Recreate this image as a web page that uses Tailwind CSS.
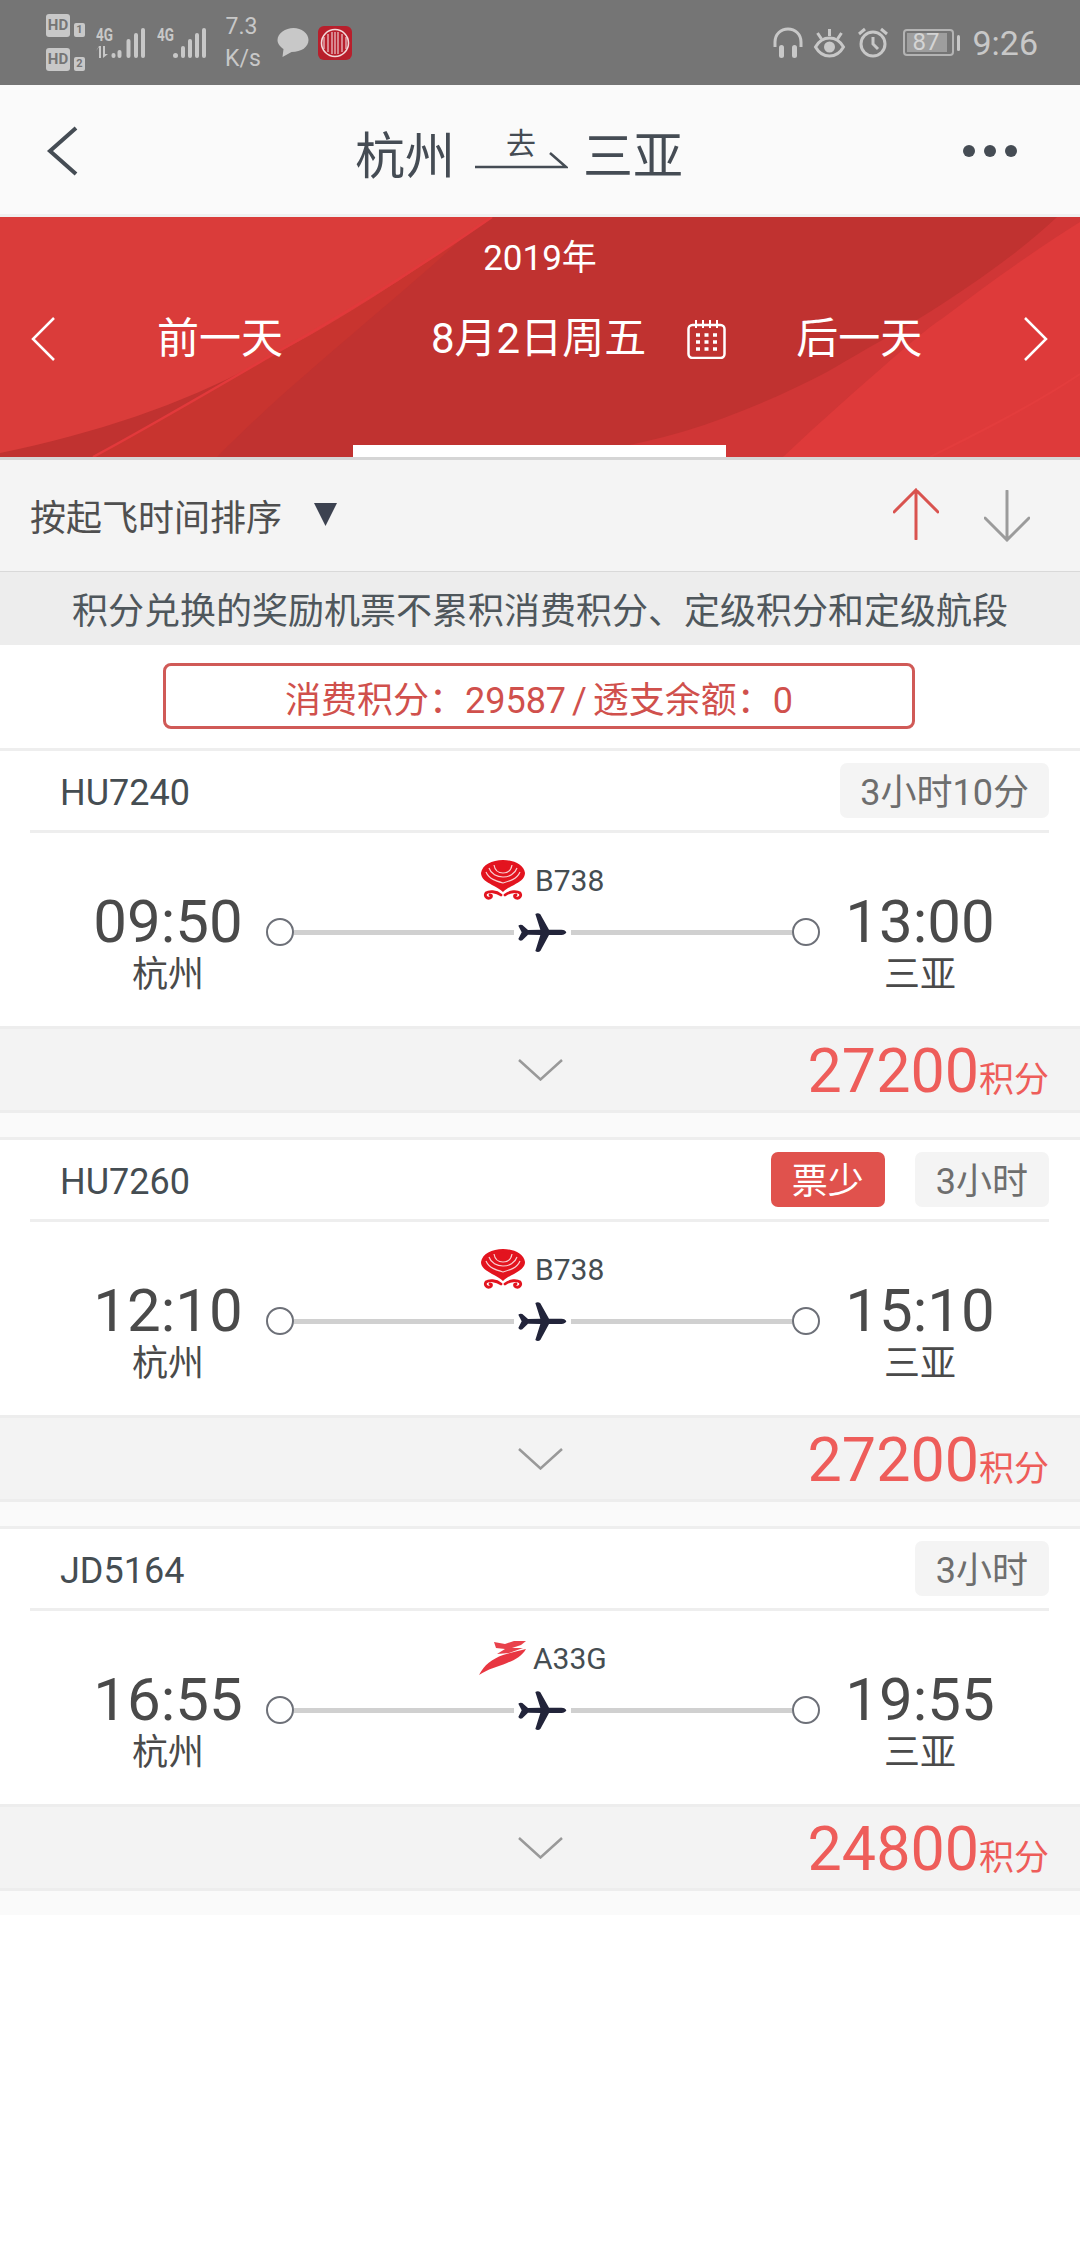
<!DOCTYPE html>
<html lang="zh-CN">

<head>
    <meta charset="UTF-8" />
    <meta name="viewport" content="width=device-width, initial-scale=1" />
    <title>杭州 - 三亚</title>
    <script src="https://cdn.jsdelivr.net/npm/@tailwindcss/browser@4"></script>
</head>

<body class="bg-white font-[Roboto,'Noto_Sans_CJK_SC',sans-serif] text-[#4a4a4a]">
    <!-- shared icons -->
    <svg class="absolute w-0 h-0">
        <symbol id="plane" viewBox="145 190 147 120">
            <path fill="#22243a" d="M290 248 Q288 241 275 240 L238 240 L212 194 Q205 188 197 193 L212 240 L175 241 L158 226 Q150 224 146 228 L156 248 L146 268 Q150 275 158 272 L175 255 L212 256 L197 304 Q205 310 212 304 L238 256 L275 256 Q288 255 290 248Z" />
        </symbol>
        <symbol id="hainan" viewBox="0 0 45 40">
            <path fill="#e3141f" d="M22 0C11 0 1 5 0 13C0 19 6 22 11 25C15 27 19 29 22 32C25 29 29 27 33 25C38 22 44 19 44 13C43 5 33 0 22 0Z" />
            <g fill="none" stroke="#fff" stroke-width="1.2" opacity="0.8">
                <path d="M13 5C14 11 18 13 22 13C26 13 30 11 31 5" />
                <path d="M8 8C10 14 16 17 22 17C28 17 34 14 36 8" />
                <path d="M5 12C8 19 15 21 22 23C29 21 36 19 39 12" />
            </g>
            <circle cx="22" cy="7" r="3.6" fill="#e3141f" />
            <g fill="none" stroke="#e3141f" stroke-width="2.8" stroke-linecap="round">
                <path d="M20 35C15 31 8 31 5 33C3 36 6 39 9 38C11 37 11 35 9 35" />
                <path d="M24 35C29 31 36 31 39 33C41 36 38 39 35 38C33 37 33 35 35 35" />
            </g>
        </symbol>
        <symbol id="dragon" viewBox="0 0 48 36">
            <g fill="#e5202c">
                <path opacity="0.9" d="M0 35C5 25 13 19 24 15C31 13 39 11 47 9C43 16 36 20 28 23C18 27 9 29 0 35Z" />
                <path opacity="0.85" d="M15 2L26 4L35 1L47 1L42 5L33 8L44 8L30 13L18 14L26 9L17 8Z" />
            </g>
        </symbol>
    </svg>

    <!-- Status bar -->
    <div class="h-[85px] bg-[#757575] flex items-center pl-[46px] pr-[42px] text-[#c8c8c8]">
        <div class="flex flex-col gap-[11px] w-[39px]">
            <div class="flex items-end justify-between">
                <span class="w-[24px] h-[23px] rounded-[3px] bg-[#c8c8c8] text-[#757575] text-[15px] leading-[23px] font-bold text-center">HD</span>
                <span class="w-[11px] h-[14px] rounded-[2px] bg-[#c8c8c8] text-[#757575] text-[11px] leading-[14px] font-bold text-center">1</span>
            </div>
            <div class="flex items-end justify-between">
                <span class="w-[24px] h-[23px] rounded-[3px] bg-[#c8c8c8] text-[#757575] text-[15px] leading-[23px] font-bold text-center">HD</span>
                <span class="w-[11px] h-[14px] rounded-[2px] bg-[#c8c8c8] text-[#757575] text-[11px] leading-[14px] font-bold text-center">2</span>
            </div>
        </div>
        <div class="relative ml-[11px] w-[49px] h-[32px]">
            <span class="absolute left-0 top-0 text-[18px] leading-[15px] font-bold scale-x-[0.75] origin-left">4G</span>
            <svg class="absolute left-0 top-0" width="49" height="32" viewBox="0 0 49 32" fill="#c8c8c8">
                <path d="M0 24L3 20V31H5V19H3ZM7 19V31L12 27H9V19Z" />
                <rect x="15.5" y="26" width="4" height="5" rx="2" />
                <rect x="21.5" y="23" width="4" height="8" rx="2" />
                <rect x="30.5" y="12" width="4" height="19" rx="2" />
                <rect x="38" y="6" width="4" height="25" rx="2" />
                <rect x="45" y="1" width="4" height="30" rx="2" />
            </svg>
        </div>
        <div class="relative ml-[12px] w-[50px] h-[32px]">
            <span class="absolute left-0 top-0 text-[18px] leading-[15px] font-bold scale-x-[0.75] origin-left">4G</span>
            <svg class="absolute left-0 top-0" width="50" height="32" viewBox="0 0 50 32" fill="#c8c8c8">
                <rect x="16" y="26" width="5" height="5" rx="2.5" />
                <rect x="24" y="19" width="4" height="12" rx="2" />
                <rect x="31" y="12" width="4" height="19" rx="2" />
                <rect x="38" y="6" width="4" height="25" rx="2" />
                <rect x="45" y="1" width="4" height="30" rx="2" />
            </svg>
        </div>
        <div class="ml-[18px] w-[33px] text-center text-[23px] leading-[32px]">
            <p>7.3</p>
            <p>K/s</p>
        </div>
        <svg class="ml-[19px]" width="32" height="31" viewBox="0 0 31 31" fill="#c8c8c8">
            <path d="M16 1C8 1 0 6 0 13C0 17 3 20 6 22L5 30L14 25C24 25 31 20 31 13C31 6 24 1 16 1Z" />
        </svg>
        <svg class="ml-[9px]" width="34" height="34" viewBox="0 0 34 34">
            <rect width="34" height="34" rx="6" fill="#b81f2c" />
            <circle cx="17" cy="17" r="13.5" fill="none" stroke="#f2d9da" stroke-width="1.6" />
            <path d="M6 11V23M10 8V26M14 6V28M17 6V28M20 6V28M24 8V26M28 11V23" stroke="#f2d9da" stroke-width="1.3" opacity="0.85" />
        </svg>

        <svg class="ml-auto" width="30" height="31" viewBox="0 0 30 31" fill="none" stroke="#c8c8c8">
            <path stroke-width="3" d="M2 20V15C2 7 8 2 15 2C22 2 28 7 28 15V20" />
            <rect x="6" y="18" width="5" height="13" rx="2.5" fill="#c8c8c8" stroke="none" />
            <rect x="19" y="18" width="5" height="13" rx="2.5" fill="#c8c8c8" stroke="none" />
        </svg>
        <svg class="ml-[10px]" width="33" height="30" viewBox="0 0 32 30" fill="none" stroke="#c8c8c8" stroke-width="3">
            <path d="M2 19C6 12 11 10 16 10C21 10 26 12 30 19C26 26 21 28 16 28C11 28 6 26 2 19Z" />
            <circle cx="16" cy="19" r="5.5" fill="#c8c8c8" stroke="none" />
            <path d="M16 1V8M4 5L8 11M28 5L24 11" />
        </svg>
        <svg class="ml-[12px]" width="30" height="31" viewBox="0 0 30 31" fill="none" stroke="#c8c8c8" stroke-width="3">
            <circle cx="15" cy="17" r="12" />
            <path d="M15 10V17L20 22M1 7L7 2M29 7L23 2" />
        </svg>
        <div class="ml-[15px] w-[51px] h-[27px] rounded-[4px] border-2 border-[#b4b4b4] p-[2px] relative">
            <div class="w-[40px] h-[19px] bg-[#9e9e9e]"></div>
            <span class="absolute inset-0 text-center text-[24px] leading-[23px] text-[#d4d4d4] pr-[6px]">87</span>
        </div>
        <div class="ml-[3px] w-[3px] h-[16px] rounded-[2px] bg-[#c8c8c8]"></div>
        <span class="ml-[12px] text-[34px] leading-none">9:26</span>
    </div>

    <!-- Title bar -->
    <div class="h-[132px] bg-[#fafafa] border-b-[3px] border-[#f0f0f0] flex items-center pl-[46px] pr-[63px] text-[#454c54]">
        <svg width="32" height="50" viewBox="0 0 32 50" fill="none" stroke="#454c54" stroke-width="4" class="mt-[3px]">
            <path d="M30 2L4 25L30 48" />
        </svg>
        <div class="ml-[277px] flex items-center text-[50px] leading-none pt-[15px]">
            <span>杭州</span>
            <div class="ml-[19px] w-[94px] flex flex-col items-center -mt-[17px]">
                <span class="text-[30px] leading-[30px]">去</span>
                <svg width="94" height="18" viewBox="0 0 94 18" fill="none" stroke="#454c54" stroke-width="2.5" class="-mt-[8px]">
                    <path d="M1 16H92L76 2" />
                </svg>
            </div>
            <span class="ml-[15px]">三亚</span>
        </div>
        <div class="ml-auto flex gap-[9px] mt-[3px]">
            <span class="w-[12px] h-[12px] rounded-full bg-[#454c54]"></span>
            <span class="w-[12px] h-[12px] rounded-full bg-[#454c54]"></span>
            <span class="w-[12px] h-[12px] rounded-full bg-[#454c54]"></span>
        </div>
    </div>

    <!-- Date band -->
    <div class="relative h-[240px] bg-[#c03230] text-white overflow-hidden">
        <svg class="absolute inset-0" width="1080" height="240" viewBox="0 0 1080 240">
            <path fill="#c8342f" d="M470 14C400 80 290 165 217 240H93L267 141Z" />
            <path fill="#da3c3a" d="M0 0H492C420 50 340 105 267 141C190 185 100 215 0 236Z" />
            <path fill="none" stroke="#e2393b" stroke-width="2.5" d="M492 0C420 50 340 100 267 141C200 180 140 215 93 240" />
            <path fill="#d03636" d="M600 233C680 222 760 190 827 155C870 130 900 113 920 101C970 70 1020 35 1057 0H1080V240H600Z" />
            <path fill="#de3a3a" d="M783 240C820 205 860 170 893 141C910 127 925 113 943 101C990 65 1040 30 1080 5V240Z" />
            <path fill="none" stroke="#e33d3d" stroke-width="2" d="M930 240C980 215 1030 190 1080 157" />
        </svg>
        <div class="relative h-full flex flex-col">
            <p class="h-[84px] text-center text-[35px] leading-[84px]">2019年</p>
            <div class="h-[76px] flex items-center pl-[31px]">
                <svg width="24" height="44" viewBox="0 0 24 44" fill="none" stroke="#fff" stroke-width="2.5">
                    <path d="M23 1L2 22L23 43" />
                </svg>
                <span class="ml-[102px] text-[42px] leading-none">前一天</span>
                <span class="ml-[148px] text-[42px] leading-none">8月2日周五</span>
                <svg class="ml-[41px]" width="39" height="39" viewBox="0 0 39 39" fill="none" stroke="#fff" stroke-width="2.5">
                    <rect x="1.5" y="5" width="36" height="33" rx="4" />
                    <path d="M9 0V8M16 0V8M23 0V8M30 0V8" stroke-width="2" />
                    <path d="M9 15h4M17.5 15h4M26 15h4M9 22h4M17.5 22h4M26 22h4M9 29h4M17.5 29h4M26 29h4" stroke-width="3.5" />
                </svg>
                <span class="ml-[70px] text-[42px] leading-none">后一天</span>
                <svg class="ml-[102px]" width="24" height="44" viewBox="0 0 24 44" fill="none" stroke="#fff" stroke-width="2.5">
                    <path d="M1 1L22 22L1 43" />
                </svg>
            </div>
            <div class="mt-auto ml-[353px] w-[373px] h-[12px] bg-white"></div>
        </div>
    </div>

    <!-- Sort -->
    <div class="border-t-[3px] border-[#d5d5d5] h-[115px] bg-[#f4f4f4] border-b border-b-[#d9d9d9] flex items-center pl-[30px] pr-[50px]">
        <span class="mt-[7px] text-[36px] leading-none text-[#4f4f4f]">按起飞时间排序</span>
        <svg class="ml-[32px] -mt-[2px]" width="23" height="23" viewBox="0 0 23 23" fill="#3c4250">
            <path d="M0 0H23L11.5 23Z" />
        </svg>
        <svg class="ml-auto -mt-[4px]" width="46" height="52" viewBox="0 0 46 52" fill="none" stroke="#d9534f" stroke-width="3" stroke-linecap="round">
            <path d="M23 51V2M1 24L23 2L45 24" />
        </svg>
        <svg class="ml-[45px]" width="46" height="52" viewBox="0 0 46 52" fill="none" stroke="#9b9b9b" stroke-width="3" stroke-linecap="round">
            <path d="M23 1V50M1 28L23 50L45 28" />
        </svg>
    </div>
    <div class="h-[73px] pt-[6px] bg-[#ededed] flex items-center justify-center text-[36px] leading-none text-[#4f575c]">积分兑换的奖励机票不累积消费积分、定级积分和定级航段</div>

    <!-- Points -->
    <div class="h-[103px] pt-[18px]">
        <div class="ml-[163px] w-[752px] h-[66px] pt-[5px] rounded-[8px] border-[3px] border-[#d05a57] flex items-center justify-center text-[36px] leading-none text-[#d0504c] [word-spacing:-3px]">
            <span>消费积分<span class="font-['Noto_Sans_CJK_TC']">：</span>29587 / 透支余额<span class="font-['Noto_Sans_CJK_TC']">：</span>0</span>
        </div>
    </div>

    <!-- Flight 1 -->
    <section class="border-t-[3px] border-[#eeeeee]">
        <div class="ml-[30px] mr-[31px] h-[82px] border-b-[3px] border-[#eeeeee] flex items-center pl-[30px] gap-[30px]">
            <span class="mr-auto mt-[4px] text-[36px] leading-none text-[#454d52]">HU7240</span>
            <span class="h-[55px] px-[20px] rounded-[7px] bg-[#f4f4f4] text-[36px] leading-[61px] text-[#6e6e6e]">3小时10分</span>
        </div>
        <div class="h-[193px] flex items-start">
            <div class="ml-[93px] w-[150px] pt-[59px] text-center">
                <p class="text-[60px] leading-[60px]">09:50</p>
                <p class="text-[36px] leading-[47px]">杭州</p>
            </div>
            <div class="ml-[23px] w-[554px]">
                <div class="mt-[27px] h-[40px] flex items-center pl-[215px] gap-[9px]">
                    <svg width="45" height="40"><use href="#hainan" /></svg>
                    <span class="mt-[2px] text-[30px] leading-none text-[#454d52]">B738</span>
                </div>
                <div class="mt-[18px] h-[28px] flex items-center">
                    <span class="w-[28px] h-[28px] rounded-full border-2 border-[#6d7078] bg-white"></span>
                    <span class="flex-1 h-[5px] bg-[#d0d0d0]"></span>
                    <svg class="mx-[4px] mt-[2px]" width="49" height="40"><use href="#plane" /></svg>
                    <span class="w-[221px] h-[5px] bg-[#d0d0d0]"></span>
                    <span class="w-[28px] h-[28px] rounded-full border-2 border-[#6d7078] bg-white"></span>
                </div>
            </div>
            <div class="ml-[25px] w-[150px] pt-[59px] text-center">
                <p class="text-[60px] leading-[60px]">13:00</p>
                <p class="text-[36px] leading-[47px]">三亚</p>
            </div>
        </div>
        <div class="h-[87px] bg-[#f3f3f3] border-y-[3px] border-[#ededed] flex items-center pl-[518px] pr-[31px]">
            <svg width="45" height="22" viewBox="0 0 45 22" fill="none" stroke="#999999" stroke-width="2.5">
                <path d="M1 1L22.5 20.5L44 1" />
            </svg>
            <p class="ml-auto pt-[12px] text-[#ee5d5a] text-[35px] leading-[60px]"><span class="text-[61px]">27200</span>积分</p>
        </div>
        <div class="h-[24px] bg-[#fafafa]"></div>
    </section>

    <!-- Flight 2 -->
    <section class="border-t-[3px] border-[#eeeeee]">
        <div class="ml-[30px] mr-[31px] h-[82px] border-b-[3px] border-[#eeeeee] flex items-center pl-[30px] gap-[30px]">
            <span class="mr-auto mt-[4px] text-[36px] leading-none text-[#454d52]">HU7260</span>
            <span class="h-[55px] px-[21px] rounded-[7px] bg-[#e0524d] text-[36px] leading-[61px] text-white">票少</span>
            <span class="h-[55px] px-[21px] rounded-[7px] bg-[#f4f4f4] text-[36px] leading-[61px] text-[#6e6e6e]">3小时</span>
        </div>
        <div class="h-[193px] flex items-start">
            <div class="ml-[93px] w-[150px] pt-[59px] text-center">
                <p class="text-[60px] leading-[60px]">12:10</p>
                <p class="text-[36px] leading-[47px]">杭州</p>
            </div>
            <div class="ml-[23px] w-[554px]">
                <div class="mt-[27px] h-[40px] flex items-center pl-[215px] gap-[9px]">
                    <svg width="45" height="40"><use href="#hainan" /></svg>
                    <span class="mt-[2px] text-[30px] leading-none text-[#454d52]">B738</span>
                </div>
                <div class="mt-[18px] h-[28px] flex items-center">
                    <span class="w-[28px] h-[28px] rounded-full border-2 border-[#6d7078] bg-white"></span>
                    <span class="flex-1 h-[5px] bg-[#d0d0d0]"></span>
                    <svg class="mx-[4px] mt-[2px]" width="49" height="40"><use href="#plane" /></svg>
                    <span class="w-[221px] h-[5px] bg-[#d0d0d0]"></span>
                    <span class="w-[28px] h-[28px] rounded-full border-2 border-[#6d7078] bg-white"></span>
                </div>
            </div>
            <div class="ml-[25px] w-[150px] pt-[59px] text-center">
                <p class="text-[60px] leading-[60px]">15:10</p>
                <p class="text-[36px] leading-[47px]">三亚</p>
            </div>
        </div>
        <div class="h-[87px] bg-[#f3f3f3] border-y-[3px] border-[#ededed] flex items-center pl-[518px] pr-[31px]">
            <svg width="45" height="22" viewBox="0 0 45 22" fill="none" stroke="#999999" stroke-width="2.5">
                <path d="M1 1L22.5 20.5L44 1" />
            </svg>
            <p class="ml-auto pt-[12px] text-[#ee5d5a] text-[35px] leading-[60px]"><span class="text-[61px]">27200</span>积分</p>
        </div>
        <div class="h-[24px] bg-[#fafafa]"></div>
    </section>

    <!-- Flight 3 -->
    <section class="border-t-[3px] border-[#eeeeee]">
        <div class="ml-[30px] mr-[31px] h-[82px] border-b-[3px] border-[#eeeeee] flex items-center pl-[30px] gap-[30px]">
            <span class="mr-auto mt-[4px] text-[36px] leading-none text-[#454d52]">JD5164</span>
            <span class="h-[55px] px-[21px] rounded-[7px] bg-[#f4f4f4] text-[36px] leading-[61px] text-[#6e6e6e]">3小时</span>
        </div>
        <div class="h-[193px] flex items-start">
            <div class="ml-[93px] w-[150px] pt-[59px] text-center">
                <p class="text-[60px] leading-[60px]">16:55</p>
                <p class="text-[36px] leading-[47px]">杭州</p>
            </div>
            <div class="ml-[23px] w-[554px]">
                <div class="mt-[27px] h-[40px] flex items-center pl-[213px] gap-[6px]">
                    <svg width="48" height="36"><use href="#dragon" /></svg>
                    <span class="mt-[2px] text-[30px] leading-none text-[#454d52]">A33G</span>
                </div>
                <div class="mt-[18px] h-[28px] flex items-center">
                    <span class="w-[28px] h-[28px] rounded-full border-2 border-[#6d7078] bg-white"></span>
                    <span class="flex-1 h-[5px] bg-[#d0d0d0]"></span>
                    <svg class="mx-[4px] mt-[2px]" width="49" height="40"><use href="#plane" /></svg>
                    <span class="w-[221px] h-[5px] bg-[#d0d0d0]"></span>
                    <span class="w-[28px] h-[28px] rounded-full border-2 border-[#6d7078] bg-white"></span>
                </div>
            </div>
            <div class="ml-[25px] w-[150px] pt-[59px] text-center">
                <p class="text-[60px] leading-[60px]">19:55</p>
                <p class="text-[36px] leading-[47px]">三亚</p>
            </div>
        </div>
        <div class="h-[87px] bg-[#f3f3f3] border-y-[3px] border-[#ededed] flex items-center pl-[518px] pr-[31px]">
            <svg width="45" height="22" viewBox="0 0 45 22" fill="none" stroke="#999999" stroke-width="2.5">
                <path d="M1 1L22.5 20.5L44 1" />
            </svg>
            <p class="ml-auto pt-[12px] text-[#ee5d5a] text-[35px] leading-[60px]"><span class="text-[61px]">24800</span>积分</p>
        </div>
        <div class="h-[24px] bg-[#fafafa]"></div>
    </section>
</body>

</html>
